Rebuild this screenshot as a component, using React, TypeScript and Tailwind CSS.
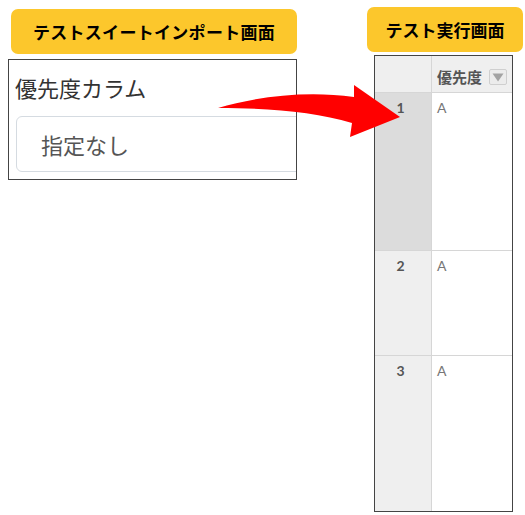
import React from "react";

const jp = { fontFamily: '"Noto Sans CJK JP", "Noto Sans", sans-serif' };
const lato = { fontFamily: 'Lato, "Noto Sans CJK JP", sans-serif' };

function Row({ n, h, selected }: { n: number; h: string; selected?: boolean }) {
  return (
    <div className={`flex ${h} border-t border-[#d6d6d6]`}>
      <div
        className={`w-[57px] shrink-0 border-r border-[#d6d6d6] ${selected ? "bg-[#dcdcdc]" : "bg-[#efefef]"} flex justify-center pt-[5px] pr-[5px] text-[14px] leading-[20px] font-bold text-[#555]`}
        style={lato}
      >
        {n}
      </div>
      <div className="flex-1 bg-white pl-[5px] pt-[5px] text-[14px] leading-[20px] text-[#777]" style={lato}>
        A
      </div>
    </div>
  );
}

export default function App() {
  return (
    <div className="relative w-[525px] h-[515px] bg-white flex overflow-hidden" style={jp}>
      <div className="pl-[8px] pt-[9px] w-[297px] shrink-0">
        <div className="ml-[3px] w-[286px] h-[45px] rounded-[7px] bg-[#fcc72c] flex items-center justify-center text-[17px] font-bold text-black tracking-[0.3px]">
          テストスイートインポート画面
        </div>
        <div className="mt-[5px] w-[289px] h-[121px] border border-[#444] overflow-hidden">
          <div className="pl-[6px] pt-[12px] text-[22px] leading-[30px] text-[#333]">優先度カラム</div>
          <div className="ml-[7px] mt-[14px] w-[320px] h-[56px] rounded-[6px] border border-[#d5dbe1] flex items-center pl-[24px] text-[22px] text-[#555]">
            指定なし
          </div>
        </div>
      </div>

      <div className="ml-[70px] pt-[7px] shrink-0">
        <div className="w-[156px] h-[45px] rounded-[7px] bg-[#fcc72c] flex items-center justify-center text-[17px] font-bold text-black">
          テスト実行画面
        </div>
        <div className="ml-[7px] mt-[3px] w-[139px] h-[457px] border border-[#444] flex flex-col overflow-hidden">
          <div className="flex h-[36px] shrink-0 bg-[#efefef]">
            <div className="w-[57px] shrink-0 border-r border-[#d6d6d6]" />
            <div className="flex-1 flex items-center pl-[5px] pt-[6px]">
              <span className="text-[15px] leading-[20px] font-bold text-[#555] whitespace-nowrap" style={jp}>
                優先度
              </span>
              <span className="ml-[7px] w-[18px] h-[16px] shrink-0 border border-[#cfcfcf] rounded-[2px] bg-[#ececec] flex items-center justify-center">
                <svg width="12" height="9" viewBox="0 0 12 9">
                  <path d="M0.5 0.5 L11.5 0.5 L6 8.5 Z" fill="#a3a3a3" />
                </svg>
              </span>
            </div>
          </div>
          <Row n={1} h="h-[158px] shrink-0" selected />
          <Row n={2} h="h-[105px] shrink-0" />
          <Row n={3} h="flex-1" />
        </div>
      </div>

      <svg className="absolute left-0 top-0 pointer-events-none" width="525" height="515" viewBox="0 0 525 515">
        <path
          d="M218 108 C 255 97, 305 90, 354 97 L354 85 L400 117 L350 137 L352 123 C 315 112, 270 108, 218 108 Z"
          fill="#ff0000"
        />
      </svg>
    </div>
  );
}
